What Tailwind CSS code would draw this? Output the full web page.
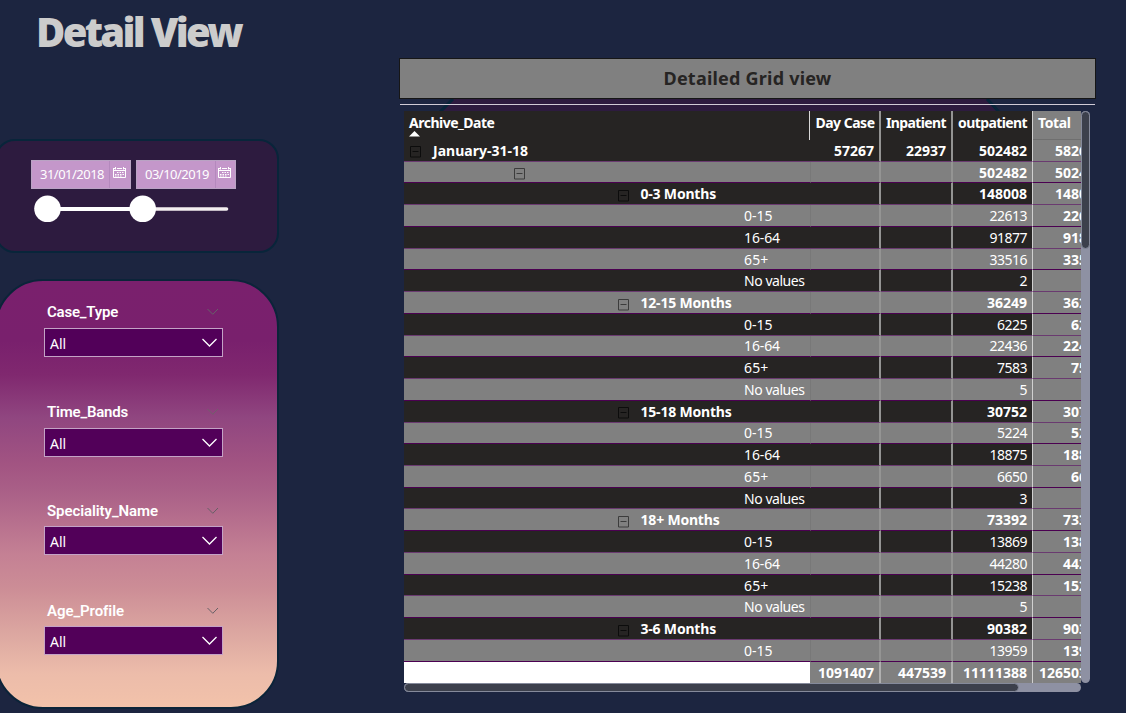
<!DOCTYPE html>
<html lang="en">
<head>
<meta charset="utf-8">
<title>Detail View</title>
<script src="https://cdn.jsdelivr.net/npm/@tailwindcss/browser@4"></script>
</head>
<body class="h-[713px] w-[1126px] overflow-hidden bg-[#1c2540] font-['Noto_Sans','Open_Sans',sans-serif] text-white">
<div class="flex h-[713px] w-[1126px] overflow-hidden">
  <aside class="flex w-[399px] shrink-0 flex-col">
    <h1 class="ml-[36px] h-[139px] pt-[4px] text-[40px] leading-[56px] font-black whitespace-nowrap text-[#cccccc]"><span data-w="205">Detail View</span></h1>

    <section class="-ml-[5px] h-[114px] w-[284px] rounded-[20px] border-2 border-[#08253a] bg-[#2d1b3f] pt-[19px] pl-[34px]">
      <div class="flex gap-[5px]">
        <div class="flex h-[29px] w-[100px] border border-[#b9a3c3] bg-[#c497ca]">
          <span class="w-[77px] pl-[8px] text-[13px] leading-[27px] whitespace-nowrap"><span data-w="64">31/01/2018</span></span>
          <span class="flex flex-1 border-l border-[#b489bd] pt-[5px] pl-[3px]"><svg width="13" height="13" viewBox="0 0 13 13" fill="none" stroke="#fff"><path d="M.5 2v9.500h12V2M.5 4.500h12M0 2.500h2M4 2.500h5M11 2.500h2M2.500 1v2.500M10.500 1v2.500"/><path d="M4 6.500h7M2 8.500h9M2 10h7" stroke-dasharray="1.500 1"/></svg></span>
        </div>
        <div class="flex h-[29px] w-[100px] border border-[#b9a3c3] bg-[#c497ca]">
          <span class="w-[78px] pl-[8px] text-[13px] leading-[27px] whitespace-nowrap"><span data-w="64">03/10/2019</span></span>
          <span class="flex flex-1 border-l border-[#b489bd] pt-[5px] pl-[2px]"><svg width="13" height="13" viewBox="0 0 13 13" fill="none" stroke="#fff"><path d="M.5 2v9.500h12V2M.5 4.500h12M0 2.500h2M4 2.500h5M11 2.500h2M2.500 1v2.500M10.500 1v2.500"/><path d="M4 6.500h7M2 8.500h9M2 10h7" stroke-dasharray="1.500 1"/></svg></span>
        </div>
      </div>
      <svg class="mt-[5px] ml-[3px] block" width="200" height="30"><path d="M14 15H110" stroke="#fff" stroke-width="4"/><path d="M110 15H192.500" stroke="#f3eef0" stroke-width="3.600" stroke-linecap="round"/><circle cx="13.500" cy="14.800" r="13.300" fill="#fff"/><circle cx="108.700" cy="14.800" r="13.300" fill="#fff"/></svg>
    </section>

    <section class="mt-[26px] -ml-[5px] h-[430px] w-[284px] rounded-[48px] border-2 border-[#0b2439] bg-[linear-gradient(180deg,#7a206d_0%,#79206d_14%,#80286f_22%,#904680_32%,#a25482_43%,#a95f87_49%,#c48094_64%,#cc8d96_72%,#deaaa2_84%,#ecbcaa_92%,#f2c2aa_100%)] pt-[20px] pl-[48px]">
      <div class="flex h-[99.600px] w-[181px] flex-col">
        <div class="flex justify-between pr-[7px] pl-[2px]"><b class="text-[15px] leading-[22px] font-semibold font-['Roboto'] whitespace-nowrap"><span data-w="71">Case_Type</span></b><svg class="mt-[7px]" width="12" height="8" fill="none" stroke="#66606a"><path d="M.5 1l5.300 5.300L11 1"/></svg></div>
        <div class="mt-[5px] -ml-px flex h-[29px] w-[179px] items-center justify-between border border-[#c4a3c6] bg-[#520059] pr-[5px] pl-[5px]"><span class="pt-[3px] text-[14px] leading-[20px]"><span data-w="16">All</span></span><svg width="15" height="9" fill="none" stroke="#fff" stroke-width="1.300"><path d="M.5 1l7 7L14.500 1"/></svg></div>
      </div>
      <div class="flex h-[99.600px] w-[181px] flex-col">
        <div class="flex justify-between pr-[7px] pl-[2px]"><b class="text-[15px] leading-[22px] font-semibold font-['Roboto'] whitespace-nowrap"><span data-w="81">Time_Bands</span></b><svg class="mt-[7px]" width="12" height="8" fill="none" stroke="#70606a"><path d="M.5 1l5.300 5.300L11 1"/></svg></div>
        <div class="mt-[5px] -ml-px flex h-[29px] w-[179px] items-center justify-between border border-[#c4a3c6] bg-[#520059] pr-[5px] pl-[5px]"><span class="pt-[3px] text-[14px] leading-[20px]"><span data-w="16">All</span></span><svg width="15" height="9" fill="none" stroke="#fff" stroke-width="1.300"><path d="M.5 1l7 7L14.500 1"/></svg></div>
      </div>
      <div class="flex h-[99.600px] w-[181px] flex-col">
        <div class="flex justify-between pr-[7px] pl-[2px]"><b class="text-[15px] leading-[22px] font-semibold font-['Roboto'] whitespace-nowrap"><span data-w="111">Speciality_Name</span></b><svg class="mt-[7px]" width="12" height="8" fill="none" stroke="#666066"><path d="M.5 1l5.300 5.300L11 1"/></svg></div>
        <div class="mt-[4px] -ml-px flex h-[29px] w-[179px] items-center justify-between border border-[#c4a3c6] bg-[#520059] pr-[5px] pl-[5px]"><span class="pt-[3px] text-[14px] leading-[20px]"><span data-w="16">All</span></span><svg width="15" height="9" fill="none" stroke="#fff" stroke-width="1.300"><path d="M.5 1l7 7L14.500 1"/></svg></div>
      </div>
      <div class="flex h-[99.600px] w-[181px] flex-col">
        <div class="flex justify-between pr-[7px] pl-[2px]"><b class="text-[15px] leading-[22px] font-semibold font-['Roboto'] whitespace-nowrap"><span data-w="77">Age_Profile</span></b><svg class="mt-[7px]" width="12" height="8" fill="none" stroke="#666066"><path d="M.5 1l5.300 5.300L11 1"/></svg></div>
        <div class="mt-[4px] -ml-px flex h-[29px] w-[179px] items-center justify-between border border-[#c4a3c6] bg-[#520059] pr-[5px] pl-[5px]"><span class="pt-[3px] text-[14px] leading-[20px]"><span data-w="16">All</span></span><svg width="15" height="9" fill="none" stroke="#fff" stroke-width="1.300"><path d="M.5 1l7 7L14.500 1"/></svg></div>
      </div>
    </section>
  </aside>

  <main class="w-[697px] pt-[58px]">
    <h2 class="flex h-[41px] items-center justify-center border border-[#161616] bg-[#808080] text-[18px] font-bold text-[#262423]"><span class="whitespace-nowrap" data-w="168">Detailed Grid view</span></h2>
    <svg class="ml-px block" width="695" height="12"><path d="M53 0H587L598 12H41Z" fill="#2d1b3f"/><path d="M53 0L40 13M587 0L599 13" stroke="#08253a" stroke-width="3"/><path d="M0 5.500H695" stroke="#d0cbd6"/></svg>
    <div class="ml-[5px] flex">
      <div class="w-[677px] overflow-hidden">
        <div class="h-[572px] w-[700px]" id="grid">
          <div class="flex h-[29px] bg-[#262423] text-[14px] leading-[23px] font-bold whitespace-nowrap">
            <div class="w-[406px] border-r border-[#d8d8d8] pl-[5px]"><span class="block w-fit" data-w="85.500">Archive_Date</span><svg class="-mt-[3px] block" width="11" height="6"><path d="M0 5.500L5.500 0L11 5.500Z" fill="#fff"/></svg></div>
            <div class="w-[71px] border-r-2 border-[#949493] pl-[5.500px]"><span data-w="59">Day Case</span></div>
            <div class="w-[72px] border-r-2 border-[#949493] pl-[5px]"><span data-w="60">Inpatient</span></div>
            <div class="w-[80px] border-r border-[#d0d0d0] pl-[5px]"><span data-w="69">outpatient</span></div>
            <div class="w-[71px] border-b border-[#6f6f6f] bg-[#808080] pl-[5px]"><span data-w="32.500">Total</span></div>
          </div>
        </div>
      </div>
      <div class="h-[572px] w-[9px] rounded-full bg-[#8e91a3]"><div class="h-[138px] rounded-full border border-[#858a9b] bg-[#3c404c]"></div></div>
    </div>
    <div class="ml-[5px] h-[9px] w-[677px] rounded-full bg-[#8e91a3]"><div class="h-[9px] w-[615px] rounded-full border border-[#858a9b] bg-[#3c404c]"></div></div>
  </main>
</div>

<script>
// level, label, day case, inpatient, outpatient, total
const rows = [
  [0,'January-31-18','57267','22937','502482','582686'],
  [1,'','','','502482','502482'],
  [2,'0-3 Months','','','148008','148008'],
  [3,'0-15','','','22613','22613'],
  [3,'16-64','','','91877','91877'],
  [3,'65+','','','33516','33516'],
  [3,'No values','','','2',''],
  [2,'12-15 Months','','','36249','36249'],
  [3,'0-15','','','6225','6225'],
  [3,'16-64','','','22436','22436'],
  [3,'65+','','','7583','7583'],
  [3,'No values','','','5',''],
  [2,'15-18 Months','','','30752','30752'],
  [3,'0-15','','','5224','5224'],
  [3,'16-64','','','18875','18875'],
  [3,'65+','','','6650','6650'],
  [3,'No values','','','3',''],
  [2,'18+ Months','','','73392','73392'],
  [3,'0-15','','','13869','13869'],
  [3,'16-64','','','44280','44280'],
  [3,'65+','','','15238','15238'],
  [3,'No values','','','5',''],
  [2,'3-6 Months','','','90382','90382'],
  [3,'0-15','','','13959','13959'],
];
const labelWidths = {'January-31-18':95,'0-3 Months':75.500,'12-15 Months':91,'15-18 Months':91,'18+ Months':79,'3-6 Months':75.500,'0-15':28.500,'16-64':36,'65+':24.500,'No values':60.500};
const indent = ['pl-[5px]','pl-[109px]','pl-[212.500px]','pl-[340px]'];
const cell = 'flex items-center justify-end pr-[5px] pt-[1px] ';
const num = (v, bold) => v ? `<span data-w="${v.length * (bold ? 8 : 7.5)}">${v}</span>` : '';
let html = '';
rows.forEach((r, i) => {
  const bold = r[0] < 3, dark = i % 2 === 0;
  const box = bold ? `<svg class="mt-[3px] shrink-0" width="13" height="12" fill="none" stroke="${dark ? '#0c0c0c' : '#3c3c3c'}"><path d="M1.500.5h10v10.500h-10zM3.500 5.500h6"/></svg>` : '';
  const line = dark ? 'border-[#6a3a70]' : 'border-[#4b0051]';
  html += `<div class="flex h-[21.740px] text-[14px] leading-[20px] whitespace-nowrap ${bold ? 'font-bold' : 'font-normal'} ${dark ? 'bg-[#262423]' : 'bg-[#808080]'}">
    <div class="flex w-[407px] items-center pt-[1px] border-b ${line} ${dark ? '' : 'border-r border-r-[#787878]'} ${indent[r[0]]}">${box}<span class="${bold ? 'ml-[11px]' : ''}" data-w="${labelWidths[r[1]] || 0}">${r[1]}</span></div>
    <div class="${cell} w-[70px] border-b ${line} border-r-2 border-r-[#949493]">${num(r[2], bold)}</div>
    <div class="${cell} w-[72px] border-b ${line} border-r-2 border-r-[#949493]">${num(r[3], bold)}</div>
    <div class="${cell} w-[80px] border-b ${line} border-r border-r-[#d0d0d0]">${num(r[4], bold)}</div>
    <div class="flex w-[71px] items-center justify-end pt-[1px] border-b ${line} bg-[#808080] pr-[1px] font-bold">${num(r[5], true)}</div>
  </div>`;
});
html += `<div class="flex h-[22px] bg-[#808080] text-[14px] leading-[20px] font-bold whitespace-nowrap">
  <div class="w-[406px] border-b border-[#d8ccd8] bg-white"></div>
  <div class="${cell} w-[71px] border-r-2 border-r-[#b0b0b0]">${num('1091407', true)}</div>
  <div class="${cell} w-[72px] border-r-2 border-r-[#b0b0b0]">${num('447539', true)}</div>
  <div class="${cell} w-[80px] border-r border-r-[#d0d0d0]">${num('11111388', true)}</div>
  <div class="flex w-[71px] items-center justify-end pt-[1px] pr-[1px]">${num('12650334', true)}</div>
</div>`;
document.getElementById('grid').insertAdjacentHTML('beforeend', html);

function fitLabels() {
  document.querySelectorAll('[data-w]').forEach(el => {
    const want = +el.dataset.w, n = el.textContent.length;
    if (!want || !n) return;
    el.style.letterSpacing = '0.001px';
    const r = document.createRange();
    r.selectNodeContents(el);
    el.style.letterSpacing = ((want - r.getBoundingClientRect().width) / n).toFixed(3) + 'px';
  });
}
fitLabels();
window.addEventListener('load', fitLabels);
document.fonts.ready.then(fitLabels);
requestAnimationFrame(() => requestAnimationFrame(fitLabels));
setTimeout(fitLabels, 100);
</script>
</body>
</html>
